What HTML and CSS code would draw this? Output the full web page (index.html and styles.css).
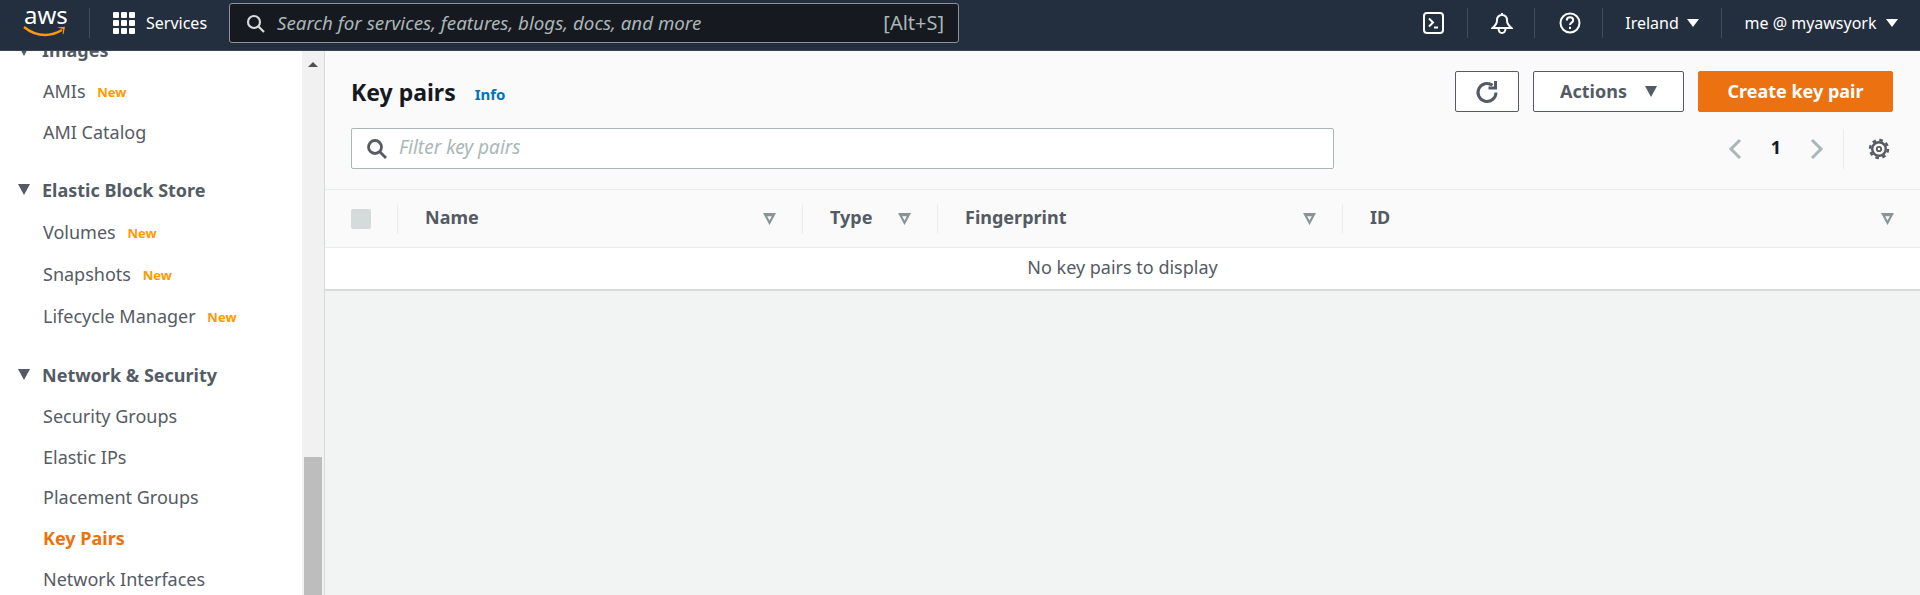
FILE: index.html
```html
<!DOCTYPE html>
<html lang="en">
<head>
    <meta charset="UTF-8">
    <title>Key pairs | EC2 Management Console</title>
    <link rel="stylesheet" href="styles.css">
</head>
<body>

    <header class="topbar">
        <a class="logo">
            <span class="logo-text">aws</span>
            <svg class="logo-smile" width="44" height="13" viewBox="0 0 44 13">
                <path d="M1 2c6 5 14 8 21 8 6 0 12-2 17-5" fill="none" stroke="#f90" stroke-width="2.4"/>
                <path d="M34 2.500l8-.8-1.500 7.500-.8-.3.500-5z" fill="#f90"/>
            </svg>
        </a>
        <span class="bar-sep sep-logo"></span>
        <svg class="grid-icon" width="22" height="22" viewBox="0 0 22 22" fill="#fff">
            <rect width="6" height="6" rx="1"/><rect x="8" width="6" height="6" rx="1"/><rect x="16" width="6" height="6" rx="1"/>
            <rect y="8" width="6" height="6" rx="1"/><rect x="8" y="8" width="6" height="6" rx="1"/><rect x="16" y="8" width="6" height="6" rx="1"/>
            <rect y="16" width="6" height="6" rx="1"/><rect x="8" y="16" width="6" height="6" rx="1"/><rect x="16" y="16" width="6" height="6" rx="1"/>
        </svg>
        <span class="services">Services</span>
        <div class="global-search">
            <svg width="19" height="19" viewBox="0 0 19 19" fill="none" stroke="#d5dbdb" stroke-width="2.200">
                <circle cx="8" cy="8" r="6"/><path d="M12.500 12.500l5.500 5.500"/>
            </svg>
            <span class="search-hint">Search for services, features, blogs, docs, and more</span>
            <span class="search-key">[Alt+S]</span>
        </div>
        <div class="bar-right">
            <span class="bar-item item-shell">
                <svg width="21" height="22" viewBox="0 0 21 22" fill="none" stroke="#fff" stroke-width="2">
                    <rect x="1" y="1" width="19" height="20" rx="3"/><path d="M6 6.500l4 4-4 4" /><path d="M11 15.500h4"/>
                </svg>
            </span>
            <span class="bar-item item-bell">
                <svg width="22" height="23" viewBox="0 0 22 23" fill="none" stroke="#fff" stroke-width="2">
                    <path d="M11 3c-3.500 0-5 2.500-5 5.500 0 3-1.500 5-4.500 7.500h19c-3-2.500-4.500-4.500-4.500-7.500C16 5.500 14.500 3 11 3z"/>
                    <path d="M11 1v2"/><path d="M7.500 17c.3 2.500 1.700 4 3.500 4s3.200-1.500 3.500-4"/>
                </svg>
            </span>
            <span class="bar-item item-help">
                <svg width="22" height="22" viewBox="0 0 22 22" fill="none" stroke="#fff" stroke-width="2">
                    <circle cx="11" cy="11" r="9.500"/>
                    <path d="M7.800 8.500c0-2 1.400-3.200 3.200-3.200s3.200 1.100 3.200 2.900c0 2.400-3.200 2.400-3.200 4.800"/>
                    <path d="M11 14.800v2.200"/>
                </svg>
            </span>
            <span class="bar-item item-region">Ireland <i class="caret"></i></span>
            <span class="bar-item item-user">me @ myawsyork <i class="caret"></i></span>
        </div>
    </header>

    <div class="page">
        <nav class="sidebar">
            <ul class="nav-list">
                <li class="nav-head nav-first"><i class="tri"></i>Images</li>
                <li class="nav-link tight">AMIs <span class="new">New</span></li>
                <li class="nav-link tight">AMI Catalog</li>
                <li class="nav-head nav-tall"><i class="tri"></i>Elastic Block Store</li>
                <li class="nav-link">Volumes <span class="new">New</span></li>
                <li class="nav-link">Snapshots <span class="new">New</span></li>
                <li class="nav-link">Lifecycle Manager <span class="new">New</span></li>
                <li class="nav-head nav-wide"><i class="tri"></i>Network &amp; Security</li>
                <li class="nav-link tight">Security Groups</li>
                <li class="nav-link tight">Elastic IPs</li>
                <li class="nav-link tight">Placement Groups</li>
                <li class="nav-link tight active">Key Pairs</li>
                <li class="nav-link tight">Network Interfaces</li>
            </ul>
        </nav>
        <div class="scrollbar">
            <i class="scroll-up"></i>
            <div class="scroll-thumb"></div>
        </div>

        <main class="content">
            <section class="panel">
                <div class="panel-top">
                    <h1>Key pairs</h1>
                    <a class="info">Info</a>
                    <div class="actions">
                        <button class="btn btn-icon">
                            <svg width="24" height="24" viewBox="0 0 24 24" fill="none" stroke="#545b64" stroke-width="3">
                                <path d="M21 12.500a9 9 0 1 1-3.500-7.200"/><path d="M20.500 1v7h-7"/>
                            </svg>
                        </button>
                        <button class="btn btn-actions">Actions <i class="tri tri-btn"></i></button>
                        <button class="btn btn-primary">Create key pair</button>
                    </div>
                </div>
                <div class="panel-filter">
                    <div class="filter">
                        <svg width="21" height="21" viewBox="0 0 21 21" fill="none" stroke="#545b64" stroke-width="2.800">
                            <circle cx="9" cy="9" r="6.500"/><path d="M14 14l6 6"/>
                        </svg>
                        <span class="filter-hint">Filter key pairs</span>
                    </div>
                    <div class="pager">
                        <svg width="14" height="22" viewBox="0 0 14 22" fill="none" stroke="#aab7b8" stroke-width="3"><path d="M12 2l-9 9 9 9"/></svg>
                        <span class="page-no">1</span>
                        <svg width="14" height="22" viewBox="0 0 14 22" fill="none" stroke="#aab7b8" stroke-width="3"><path d="M2 2l9 9-9 9"/></svg>
                    </div>
                    <div class="prefs">
                        <svg width="22" height="22" viewBox="0 0 22 22" fill="none" stroke="#545b64">
                            <circle cx="11" cy="11" r="6.800" stroke-width="2.400"/>
                            <circle cx="11" cy="11" r="9" stroke-width="2.400" stroke-dasharray="3.600 3.470"/>
                            <circle cx="11" cy="11" r="2.200" stroke-width="1.800"/>
                        </svg>
                    </div>
                </div>
            </section>

            <table class="grid">
                <thead>
                    <tr>
                        <th class="col-check"><span class="th-in"><i class="check"></i></span></th>
                        <th class="col-name"><span class="th-in">Name<i class="sort"></i></span></th>
                        <th class="col-type"><span class="th-in">Type<i class="sort"></i></span></th>
                        <th class="col-finger"><span class="th-in">Fingerprint<i class="sort"></i></span></th>
                        <th><span class="th-in">ID<i class="sort"></i></span></th>
                    </tr>
                </thead>
                <tbody>
                    <tr>
                        <td colspan="5">No key pairs to display</td>
                    </tr>
                </tbody>
            </table>
        </main>
    </div>

</body>
</html>
```

FILE: styles.css
```css
* {
    box-sizing: border-box;
}
html, body {
    height: 100%;
}
body {
    margin: 0;
    overflow: hidden;
    font-family: "Noto Sans", sans-serif;
    font-size: 18px;
    color: #545b64;
    background: #f2f3f3;
}

/* top bar */
.topbar {
    display: flex;
    align-items: center;
    height: 51px;
    padding-bottom: 4px;
    background: #232f3e;
    border-bottom: 1px solid #3b4552;
    color: #fff;
}
.logo {
    position: relative;
    display: block;
    width: 89px;
    height: 46px;
}
.logo-text {
    position: absolute;
    left: 24px;
    top: 0;
    font-size: 24px;
    line-height: 30px;
    color: #fff;
}
.logo-smile {
    position: absolute;
    left: 23px;
    top: 25px;
}
.bar-sep {
    width: 1px;
    height: 30px;
    background: #414d5c;
}
.grid-icon {
    margin-left: 23px;
}
.services {
    margin-left: 11px;
    margin-bottom: 1px;
    font-size: 16px;
}
.global-search {
    display: flex;
    align-items: center;
    width: 730px;
    height: 40px;
    margin-left: 22px;
    padding: 0 14px 0 16px;
    background: #16191f;
    border: 1px solid #8d9499;
    border-radius: 3px;
    color: #aab7b8;
}
.search-hint {
    margin-left: 12px;
    margin-bottom: 2px;
    font-size: 18.750px;
    font-style: italic;
}
.search-key {
    margin-left: auto;
    margin-bottom: 2px;
    font-size: 20px;
}
.bar-right {
    display: flex;
    align-items: center;
    margin-left: auto;
}
.bar-item {
    display: flex;
    align-items: center;
    justify-content: center;
    height: 30px;
    border-left: 1px solid #414d5c;
    font-size: 16px;
}
.item-shell {
    width: 67px;
    border-left: 0;
}
.item-bell {
    width: 67px;
    padding-left: 2px;
}
.item-help {
    width: 68px;
    padding-left: 2px;
}
.item-region {
    width: 119px;
    gap: 8px;
}
.item-user {
    width: 199px;
    gap: 9px;
}
.caret {
    width: 0;
    height: 0;
    border-left: 6px solid transparent;
    border-right: 6px solid transparent;
    border-top: 8px solid #fff;
}

/* page */
.page {
    display: flex;
    height: 544px;
}
.sidebar {
    width: 302px;
    background: #fff;
    overflow: hidden;
}
.nav-list {
    list-style: none;
    margin: -22px 0 0;
    padding: 0;
}
.nav-head {
    display: flex;
    align-items: center;
    height: 42px;
    margin-top: 15.500px;
    padding-left: 18px;
    font-weight: 700;
}
.nav-first {
    margin-top: 0;
}
.nav-tall {
    height: 43px;
}
.nav-wide {
    margin-top: 16.500px;
}
.nav-head .tri {
    margin-right: 12px;
}
.nav-link {
    display: flex;
    align-items: center;
    height: 42px;
    padding-left: 43px;
    white-space: pre;
}
.nav-link.tight {
    height: 40.750px;
}
.nav-link.active {
    color: #ec7211;
    font-weight: 700;
}
.new {
    margin-left: 7px;
    margin-top: 2px;
    font-size: 13px;
    font-weight: 700;
    color: #ff9900;
}
.tri {
    display: inline-block;
    width: 0;
    height: 0;
    border-left: 6.500px solid transparent;
    border-right: 6.500px solid transparent;
    border-top: 11px solid #545b64;
}

/* scrollbar */
.scrollbar {
    display: flex;
    flex-direction: column;
    align-items: center;
    width: 22px;
    background: #f1f1f1;
    padding-top: 11px;
}
.scroll-up {
    width: 0;
    height: 0;
    border-left: 5px solid transparent;
    border-right: 5px solid transparent;
    border-bottom: 5px solid #505050;
}
.scroll-thumb {
    width: 18px;
    height: 138px;
    margin-top: 390px;
    background: #bdbdbd;
}

/* main area */
.content {
    flex: 1;
    border-left: 1px solid #d5dbdb;
}
.panel {
    height: 138px;
    padding: 20px 27px 0 26px;
    background: #fafafa;
}
.panel-top {
    display: flex;
    align-items: center;
    height: 41px;
}
h1 {
    margin: 0;
    font-size: 23px;
    font-weight: 700;
    color: #16191f;
}
.info {
    margin-left: 19px;
    margin-top: 5px;
    font-size: 15px;
    font-weight: 700;
    color: #0073bb;
}
.actions {
    display: flex;
    gap: 14px;
    margin-left: auto;
}
.btn {
    height: 41px;
    padding: 0 0 2px;
    border: 1px solid #545b64;
    border-radius: 2px;
    background: #fff;
    color: #545b64;
    font-family: inherit;
    font-size: 18px;
    font-weight: 700;
}
.btn-icon {
    display: flex;
    align-items: center;
    justify-content: center;
    width: 64px;
    padding: 0;
}
.btn-actions {
    display: flex;
    align-items: center;
    justify-content: center;
    gap: 18px;
    width: 151px;
}
.tri-btn {
    margin-top: 2px;
}
.btn-primary {
    width: 195px;
    background: #ec7211;
    border-color: #ec7211;
    color: #fff;
}
.panel-filter {
    display: flex;
    align-items: center;
    margin-top: 16px;
}
.filter {
    display: flex;
    align-items: center;
    width: 983px;
    height: 41px;
    padding-left: 14px;
    background: #fff;
    border: 1px solid #aab7b8;
    border-radius: 2px;
}
.filter-hint {
    margin-left: 12px;
    margin-bottom: 3px;
    font-size: 19px;
    font-style: italic;
    color: #aab7b8;
}
.pager {
    display: flex;
    align-items: center;
    margin-left: auto;
    gap: 29px;
    padding-right: 19px;
}
.page-no {
    margin-bottom: 3px;
    font-weight: 700;
    color: #16191f;
}
.prefs {
    display: flex;
    align-items: center;
    height: 40px;
    padding-left: 24px;
    padding-right: 3px;
    border-left: 1px solid #eaeded;
}

/* table */
.grid {
    width: 100%;
    table-layout: fixed;
    border-collapse: collapse;
}
.grid th {
    height: 58px;
    padding: 0;
    background: #fafafa;
    border-top: 1px solid #eaeded;
    border-bottom: 1px solid #eaeded;
    text-align: left;
    font-weight: 700;
}
.col-check {
    width: 72px;
}
.col-name {
    width: 405px;
}
.col-type {
    width: 135px;
}
.col-finger {
    width: 405px;
}
.th-in {
    display: flex;
    align-items: center;
    justify-content: space-between;
    height: 30px;
    padding: 0 26px 4px 27px;
    border-left: 1px solid #eaeded;
}
.col-check .th-in {
    border-left: 0;
    padding: 0 0 0 26px;
}
.check {
    width: 20px;
    height: 20px;
    border-radius: 2px;
    background: #d5dbdb;
}
.sort {
    width: 13px;
    height: 12px;
    margin-top: 5px;
    background: #879596;
    clip-path: polygon(0 0, 100% 0, 50% 100%, 50% 62%, 68% 28%, 32% 28%, 50% 62%, 50% 100%);
}
.grid td {
    height: 42px;
    padding: 0 0 2px;
    background: #fff;
    border-bottom: 2px solid #d5dbdb;
    text-align: center;
}
```
